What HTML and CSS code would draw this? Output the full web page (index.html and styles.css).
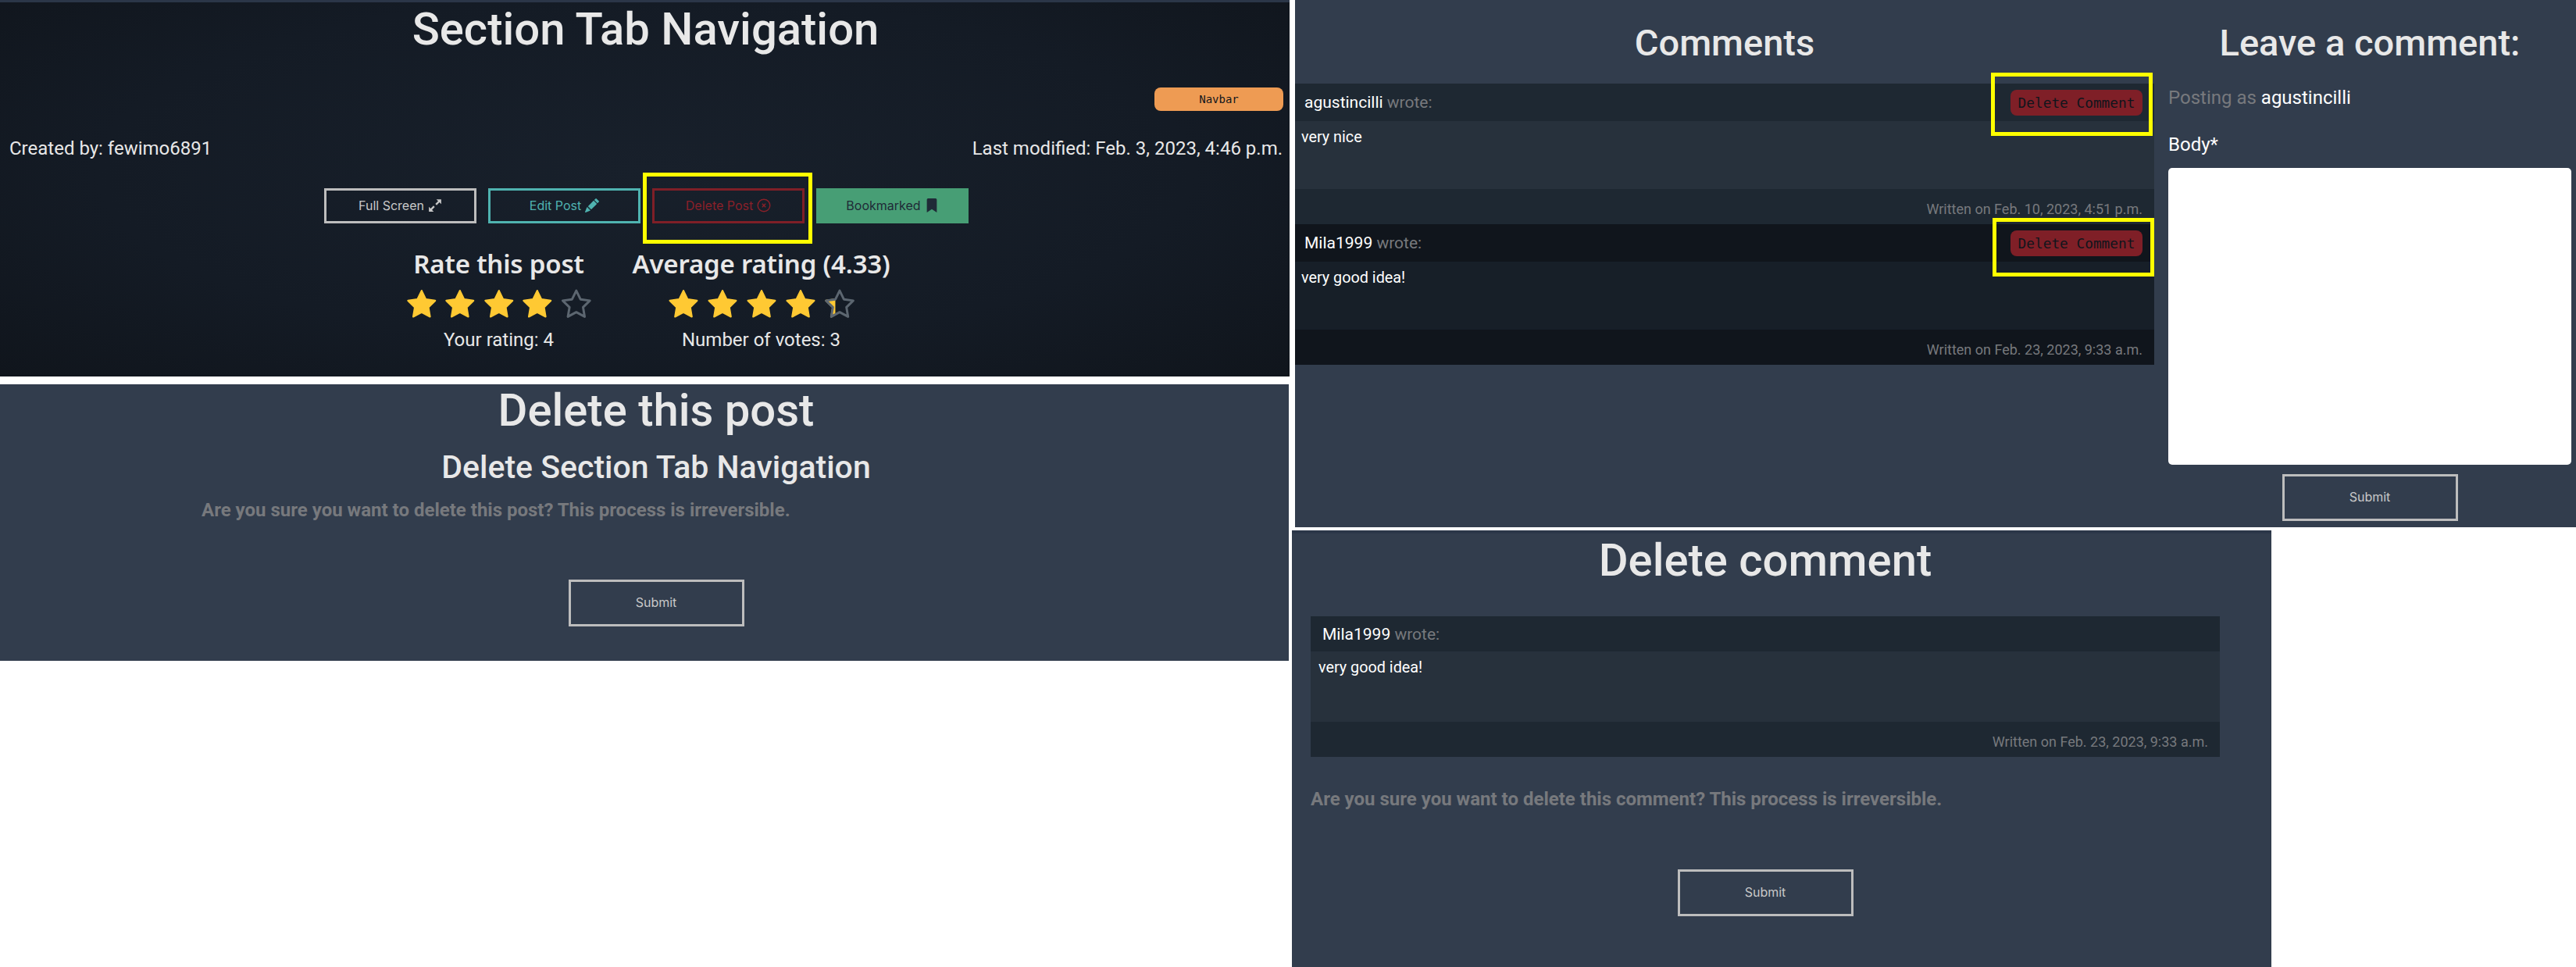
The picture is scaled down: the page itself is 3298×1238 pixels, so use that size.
FILE: index.html
```html
<!DOCTYPE html>
<html lang="en">
<head>
  <meta charset="UTF-8" />
  <title>Delete post and comment screens</title>
  <link rel="stylesheet" href="styles.css">
</head>
<body>

  <svg class="defs" aria-hidden="true">
    <defs>
      <path id="star-shape" d="M12 2.6l2.9 6 6.5.9-4.7 4.6 1.1 6.5-5.8-3.1-5.8 3.1 1.1-6.5-4.7-4.6 6.5-.9z"/>
      <clipPath id="third-star"><rect x="0" y="0" width="9" height="24"/></clipPath>
    </defs>
  </svg>

  <!-- Post detail -->
  <section class="shot shot-post">
    <h1 class="post-title">Section Tab Navigation</h1>
    <div class="tags"><span class="tag">Navbar</span></div>
    <div class="meta">
      <span>Created by: fewimo6891</span>
      <span>Last modified: Feb. 3, 2023, 4:46 p.m.</span>
    </div>
    <div class="actions">
      <a class="btn btn-light">Full Screen
        <svg class="icon" viewBox="0 0 16 16"><path d="M9.5 1H15v5.5l-2-2-3.2 3.2-1.5-1.5L11.5 3z"/><path d="M6.5 15H1V9.5l2 2 3.2-3.2 1.5 1.5L4.5 13z"/></svg>
      </a>
      <a class="btn btn-teal">Edit Post
        <svg class="icon" viewBox="0 0 16 16"><path d="M12.854.146a.5.5 0 0 0-.707 0L10.5 1.793 14.207 5.5l1.647-1.646a.5.5 0 0 0 0-.708l-3-3zm.646 6.061L9.793 2.5 3.293 9H3.5a.5.5 0 0 1 .5.5v.5h.5a.5.5 0 0 1 .5.5v.5h.5a.5.5 0 0 1 .5.5v.5h.5a.5.5 0 0 1 .5.5v.207l6.5-6.5zm-7.468 7.468A.5.5 0 0 1 6 13.5V13h-.5a.5.5 0 0 1-.5-.5V12h-.5a.5.5 0 0 1-.5-.5V11h-.5a.5.5 0 0 1-.5-.5V10h-.5a.499.499 0 0 1-.175-.032l-.179.178a.5.5 0 0 0-.11.168l-2 5a.5.5 0 0 0 .65.65l5-2a.5.5 0 0 0 .168-.11l.178-.178z"/></svg>
      </a>
      <a class="btn btn-red">Delete Post
        <svg class="icon icon-line" viewBox="0 0 18 18"><circle cx="9" cy="9" r="7.8"/><path d="M6.8 6.8l4.4 4.4M11.2 6.8l-4.4 4.4"/></svg>
      </a>
      <a class="btn btn-green">Bookmarked
        <svg class="icon" viewBox="0 0 12 17"><path d="M0 1.5A1.5 1.5 0 0 1 1.5 0h9A1.5 1.5 0 0 1 12 1.5V17l-6-4-6 4z"/></svg>
      </a>
    </div>
    <div class="ratings">
      <div class="rating">
        <h3>Rate this post</h3>
        <div class="stars">
          <svg class="star" viewBox="2 2 20 20"><use href="#star-shape" class="star-fill"/></svg>
          <svg class="star" viewBox="2 2 20 20"><use href="#star-shape" class="star-fill"/></svg>
          <svg class="star" viewBox="2 2 20 20"><use href="#star-shape" class="star-fill"/></svg>
          <svg class="star" viewBox="2 2 20 20"><use href="#star-shape" class="star-fill"/></svg>
          <svg class="star" viewBox="2 2 20 20"><use href="#star-shape" class="star-line"/></svg>
        </div>
        <p>Your rating: 4</p>
      </div>
      <div class="rating">
        <h3>Average rating (4.33)</h3>
        <div class="stars">
          <svg class="star" viewBox="2 2 20 20"><use href="#star-shape" class="star-fill"/></svg>
          <svg class="star" viewBox="2 2 20 20"><use href="#star-shape" class="star-fill"/></svg>
          <svg class="star" viewBox="2 2 20 20"><use href="#star-shape" class="star-fill"/></svg>
          <svg class="star" viewBox="2 2 20 20"><use href="#star-shape" class="star-fill"/></svg>
          <svg class="star" viewBox="2 2 20 20"><g clip-path="url(#third-star)"><use href="#star-shape" class="star-fill"/></g><use href="#star-shape" class="star-line"/></svg>
        </div>
        <p>Number of votes: 3</p>
      </div>
    </div>
    <div class="mark mark-post"></div>
  </section>

  <!-- Delete post -->
  <section class="shot shot-delete-post">
    <h1 class="page-title">Delete this post</h1>
    <h2 class="page-sub">Delete Section Tab Navigation</h2>
    <p class="warning">Are you sure you want to delete this post? This process is irreversible.</p>
    <a class="btn btn-submit">Submit</a>
  </section>

  <!-- Comments -->
  <section class="shot shot-comments">
    <div class="comments-col">
      <h2 class="col-title">Comments</h2>
      <div class="comment-list">
        <article class="comment">
          <header class="comment-head">
            <span class="who"><b>agustincilli</b> wrote:</span>
            <a class="btn-del">Delete Comment</a>
          </header>
          <div class="comment-body">very nice</div>
          <footer class="comment-foot">Written on Feb. 10, 2023, 4:51 p.m.</footer>
        </article>
        <article class="comment comment-alt">
          <header class="comment-head">
            <span class="who"><b>Mila1999</b> wrote:</span>
            <a class="btn-del">Delete Comment</a>
          </header>
          <div class="comment-body">very good idea!</div>
          <footer class="comment-foot">Written on Feb. 23, 2023, 9:33 a.m.</footer>
        </article>
      </div>
    </div>
    <form class="form-col">
      <h2 class="col-title">Leave a comment:</h2>
      <p class="posting">Posting as <b>agustincilli</b></p>
      <label class="body-label" for="body">Body*</label>
      <textarea id="body"></textarea>
      <a class="btn btn-submit">Submit</a>
    </form>
    <div class="mark mark-c1"></div>
    <div class="mark mark-c2"></div>
  </section>

  <!-- Delete comment -->
  <section class="shot shot-delete-comment">
    <h1 class="page-title">Delete comment</h1>
    <article class="comment comment-single">
      <header class="comment-head">
        <span class="who"><b>Mila1999</b> wrote:</span>
      </header>
      <div class="comment-body">very good idea!</div>
      <footer class="comment-foot">Written on Feb. 23, 2023, 9:33 a.m.</footer>
    </article>
    <p class="warning">Are you sure you want to delete this comment? This process is irreversible.</p>
    <a class="btn btn-submit">Submit</a>
  </section>

</body>
</html>
```

FILE: styles.css
```css
body { margin: 0; background: #fff; height: 1238px; overflow: hidden; position: relative; font-family: Roboto, Arial, sans-serif; color: #e8e8e8; }
h1, h2, h3, p { margin: 0; }
.defs { position: absolute; width: 0; height: 0; }

/* The four screenshots sit on a free canvas */
.shot { position: absolute; box-sizing: border-box; background: #323d4d; }
.shot-post { left: 0; top: 0; width: 1651px; height: 482px; border-top: 3px solid #2b3648; background: radial-gradient(ellipse at 50% 45%, #18202b 0%, #141b25 60%, #10151c 100%); }
.shot-delete-post { left: 0; top: 492px; width: 1650px; height: 354px; padding-left: 30px; text-align: center; }
.shot-comments { left: 1658px; top: 0; width: 1640px; height: 675px; padding-top: 21px; display: flex; }
.shot-delete-comment { left: 1654px; top: 679px; width: 1254px; height: 559px; border-top: 4px solid #2b3648; padding: 0 66px 0 24px; text-align: center; }

.mark { position: absolute; box-sizing: border-box; border: 5px solid #ffff00; }
.mark-post { left: 823px; top: 218px; width: 217px; height: 91px; }
.mark-c1 { left: 891px; top: 93px; width: 207px; height: 81px; }
.mark-c2 { left: 893px; top: 279px; width: 207px; height: 75px; }

/* Post detail */
.post-title { font-size: 58px; font-weight: 500; line-height: 68px; text-align: center; padding-left: 2px; }
.tags { display: flex; justify-content: flex-end; padding-right: 8px; margin-top: 41px; }
.tag { width: 165px; height: 30px; line-height: 30px; text-align: center; background: #ee9b53; border-radius: 8px; color: #10151c; font-family: "DejaVu Sans Mono", monospace; font-size: 14px; }
.meta { display: flex; justify-content: space-between; padding: 0 9px 0 12px; margin-top: 34px; font-size: 24px; line-height: 28px; }

.actions { display: flex; justify-content: center; gap: 15px; margin-top: 37px; padding-left: 4px; }
.btn { box-sizing: border-box; display: flex; align-items: center; justify-content: center; gap: 5px; width: 195px; height: 45px; padding-bottom: 2px; border: 3px solid #bdbdbd; color: #c8c8c8; font-family: Inter, sans-serif; font-size: 16px; }
.icon { width: 18px; height: 18px; fill: currentColor; }
.icon-line { fill: none; stroke: currentColor; stroke-width: 1.4; }
.btn-teal { border-color: #4fb3b0; color: #4fb3b0; }
.btn-red { border-color: #7f1f27; color: #8a2029; }
.btn-green { border-color: #479e75; background: #479e75; color: #1f2a37; }
.btn-submit { width: 225px; height: 60px; }

.ratings { display: grid; grid-template-columns: 236px 330px; column-gap: 53px; justify-content: center; margin-top: 32px; padding-left: 9px; text-align: center; }
.rating h3 { font-family: "Noto Sans", sans-serif; font-size: 33px; font-weight: 600; line-height: 40px; letter-spacing: -0.2px; white-space: nowrap; }
.rating p { font-size: 24px; line-height: 26px; margin-top: 14px; }
.stars { display: flex; justify-content: center; gap: 12px; margin-top: 13px; }
.star { width: 38px; height: 37px; overflow: visible; }
.star-fill { fill: #ffc933; stroke: #ffc933; stroke-width: 1.2; stroke-linejoin: round; }
.star-line { fill: none; stroke: #5c6670; stroke-width: 1.6; stroke-linejoin: round; }

/* Delete pages */
.page-title { font-size: 58px; font-weight: 500; line-height: 66px; }
.page-sub { font-size: 41px; font-weight: 500; line-height: 48px; margin-top: 16px; }
.warning { color: #77797d; font-size: 24px; font-weight: 700; line-height: 30px; text-align: left; }
.shot-delete-post .warning { margin-top: 16px; padding-left: 228px; }
.shot-delete-post .btn-submit { margin: 74px auto 0; }
.shot-delete-comment .page-title { line-height: 68px; }
.shot-delete-comment .warning { margin-top: 39px; }
.shot-delete-comment .btn-submit { margin: 75px auto 0; }

/* Comments */
.comments-col { width: 1100px; }
.col-title { font-size: 47px; font-weight: 500; line-height: 68px; text-align: center; }
.comment-list { margin-top: 18px; }
.comment { background: #27313c; font-size: 20px; }
.comment-head { display: flex; justify-content: space-between; align-items: center; height: 48px; padding: 0 15px 0 12px; background: #1e2832; }
.who { color: #77797d; font-size: 21px; }
.who b { color: #fff; font-weight: 400; }
.comment-body { height: 87px; box-sizing: border-box; padding: 8px; line-height: 26px; color: #fff; text-align: left; font-size: 19.8px; }
.comment-foot { height: 45px; box-sizing: border-box; padding: 13px 15px 0 0; line-height: 26px; text-align: right; background: #1e2832; color: #77797d; font-size: 18px; }
.comment-alt { background: #171f28; }
.comment-alt .comment-head, .comment-alt .comment-foot { background: #10151c; }
.btn-del { width: 169px; height: 33px; line-height: 33px; text-align: center; background: #7f1f27; border-radius: 8px; color: #10151c; font-family: "DejaVu Sans Mono", monospace; font-size: 17.8px; }

.comment-single { margin-top: 38px; }
.comment-single .comment-head { height: 45px; padding-left: 15px; }
.comment-single .comment-body { height: 90px; padding: 8px 10px; }

.form-col { width: 516px; margin-left: 18px; }
.posting { color: #77797d; font-size: 24px; line-height: 30px; margin-top: 21px; }
.posting b { color: #fff; font-weight: 400; }
.body-label { display: block; color: #fff; font-size: 24px; line-height: 30px; margin-top: 30px; }
textarea { display: block; box-sizing: border-box; width: 516px; height: 380px; margin-top: 15px; border: 0; border-radius: 5px; background: #fff; resize: none; }
.form-col .btn-submit { margin: 12px auto 0; }
```
